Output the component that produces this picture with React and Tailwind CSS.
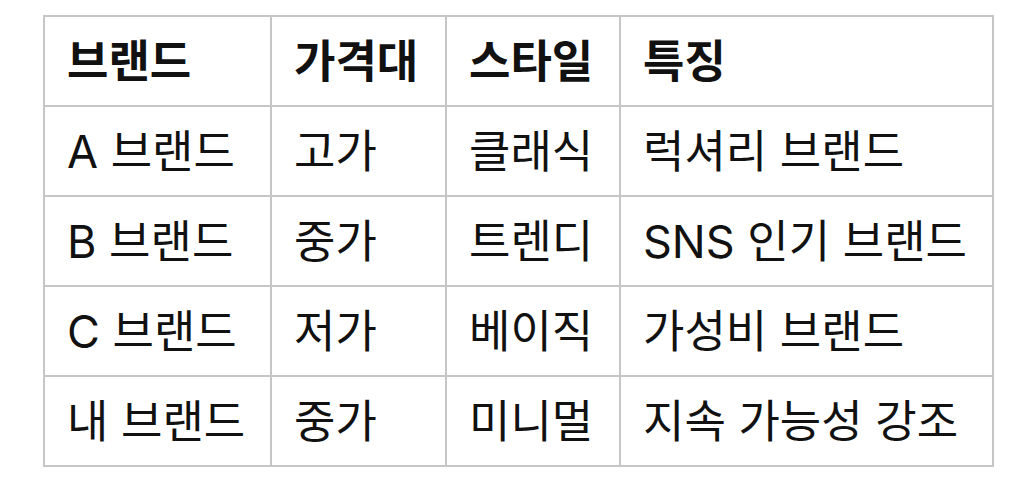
const header = ['브랜드', '가격대', '스타일', '특징'];

const rows = [
  ['A 브랜드', '고가', '클래식', '럭셔리 브랜드'],
  ['B 브랜드', '중가', '트렌디', 'SNS 인기 브랜드'],
  ['C 브랜드', '저가', '베이직', '가성비 브랜드'],
  ['내 브랜드', '중가', '미니멀', '지속 가능성 강조'],
];

export default function App() {
  return (
    <div className="min-h-screen w-full bg-white pl-[43px] pt-[15px] font-['Inter','Noto_Sans_CJK_KR',sans-serif] text-[#111]">
      <table className="border-collapse text-[45px] leading-none">
        <colgroup>
          <col className="w-[227px]" />
          <col className="w-[175px]" />
          <col className="w-[174px]" />
          <col className="w-[373px]" />
        </colgroup>
        <thead>
          <tr className="h-[90px]">
            {header.map((h) => (
              <th key={h} className="border-2 border-[#c6c6c6] pl-[22px] pr-0 text-left font-semibold">
                {h}
              </th>
            ))}
          </tr>
        </thead>
        <tbody>
          {rows.map((row) => (
            <tr key={row[0]} className="h-[90px]">
              {row.map((cell, i) => (
                <td key={i} className="border-2 border-[#c6c6c6] pl-[22px] pr-0 text-left whitespace-nowrap">
                  {cell}
                </td>
              ))}
            </tr>
          ))}
        </tbody>
      </table>
    </div>
  );
}
